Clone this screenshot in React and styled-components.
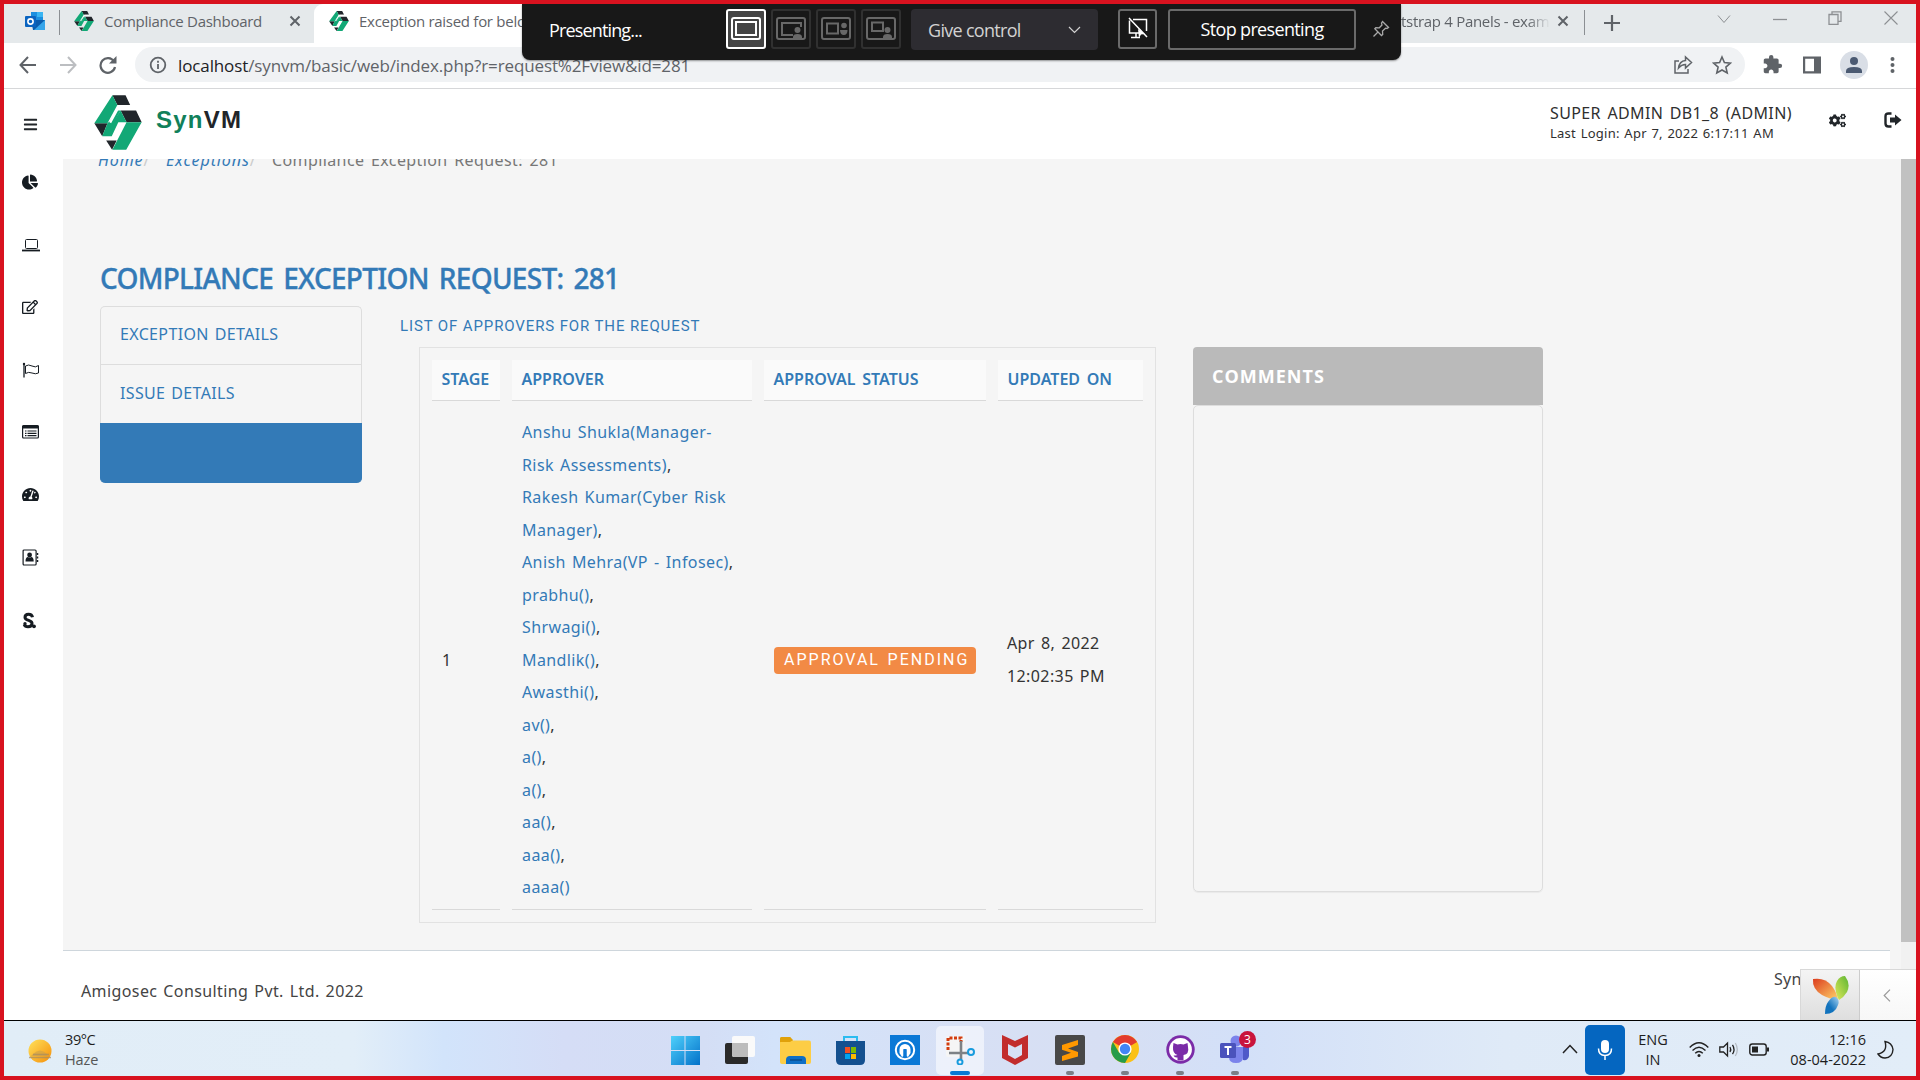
import React from "react";
import styled, { createGlobalStyle, css } from "styled-components";
import {
  FaBars,
  FaChartPie,
  FaRegEdit,
  FaTachometerAlt,
  FaCogs,
} from "react-icons/fa";
import { MdExtension } from "react-icons/md";

const GlobalStyle = createGlobalStyle`
  *, *::before, *::after { box-sizing: border-box; }
  body { margin: 0; background: #fff; overflow: hidden; }
  svg { display: block; flex: none; }
`;

const noto = `"Noto Sans", "Open Sans", sans-serif`;
const segoe = `"Open Sans", "Noto Sans", sans-serif`;
const roboto = `Roboto, "Noto Sans", sans-serif`;

const Screen = styled.div`
  position: relative;
  width: 1920px;
  height: 1080px;
  border: 4px solid #d8121f;
  display: flex;
  flex-direction: column;
  overflow: hidden;
  background: #fff;
  color: #333;
  font-family: ${noto};
  font-size: 16px;
`;

/* ---------- browser ---------- */

const TabStrip = styled.div`
  height: 39px;
  flex: none;
  display: flex;
  background: #e5e9eb;
  font-family: ${segoe};
  font-size: 15px;
  line-height: 34px;
  color: #5f6368;
`;

const PinnedTab = styled.div`
  width: 55px;
  padding: 7px 0 0 21px;
  flex: none;
`;

const TabDivider = styled.div`
  width: 1px;
  height: 25px;
  margin-top: 6px;
  background: #8b8f93;
  flex: none;
`;

const Tab = styled.div`
  width: ${(p) => p.$w}px;
  flex: none;
  display: flex;
  align-items: flex-start;
  padding-left: ${(p) => p.$pad || 0}px;
  overflow: hidden;
  ${(p) =>
    p.$active &&
    css`
      background: #fff;
      border-radius: 9px 0 0 0;
    `}
`;

const TabIcon = styled.div`
  padding-top: 7px;
  margin-right: 10px;
`;

const TabTitle = styled.span`
  white-space: nowrap;
  letter-spacing: ${(p) => p.$ls || "0"}px;
  width: ${(p) => p.$w}px;
  overflow: hidden;
  ${(p) =>
    p.$fade &&
    css`
      mask-image: linear-gradient(90deg, #000 85%, transparent);
    `}
`;

const CloseMark = styled.div`
  padding: 11px 0 0 ${(p) => p.$gap}px;
`;

const WindowControls = styled.div`
  margin-left: auto;
  width: 203px;
  padding: 7px 18px 0 4px;
  display: flex;
  justify-content: space-between;
`;

const AddressBar = styled.div`
  height: 46px;
  flex: none;
  display: flex;
  align-items: center;
  border-bottom: 1px solid #d6d7d9;
  padding: 0 21px 2px 14px;
`;

const NavButtons = styled.div`
  display: flex;
  gap: 20px;
  width: 117px;
`;

const UrlPill = styled.div`
  width: 1610px;
  height: 35px;
  border-radius: 18px;
  background: #f0f2f4;
  display: flex;
  align-items: center;
  padding: 1px 13px 0 14px;
  font-family: ${segoe};
  font-size: 17px;
  color: #5f6368;
  gap: 11px;
`;

const Url = styled.span`
  white-space: nowrap;
  letter-spacing: -0.12px;
  b {
    font-weight: 400;
    color: #202124;
  }
`;

const PillActions = styled.div`
  margin-left: auto;
  display: flex;
  gap: 19px;
`;

const ToolbarActions = styled.div`
  flex: 1;
  display: flex;
  align-items: center;
  justify-content: space-between;
  margin-left: 17px;
`;

const Avatar = styled.div`
  width: 28px;
  height: 28px;
  margin: 0 2px 0 -2px;
  border-radius: 50%;
  background: #d9dee6;
  display: flex;
  align-items: center;
  justify-content: center;
`;

/* ---------- presenting overlay ---------- */

const PresentBar = styled.div`
  position: absolute;
  left: 518px;
  top: 0;
  width: 879px;
  height: 56px;
  border-radius: 0 0 8px 8px;
  background: #181818;
  color: #fff;
  display: flex;
  align-items: flex-start;
  padding: 5px 0 0 27px;
  font-family: ${segoe};
  font-size: 18px;
  box-shadow: 0 1px 2px rgba(0, 0, 0, 0.4);
`;

const PresentLabel = styled.div`
  width: 177px;
  line-height: 42px;
  letter-spacing: -0.85px;
`;

const LayoutButton = styled.div`
  width: 40px;
  height: 40px;
  margin-right: 5px;
  border-radius: 3px;
  border: 2px solid ${(p) => (p.$on ? "#fff" : "#303030")};
  background: ${(p) => (p.$on ? "#444" : "transparent")};
  color: ${(p) => (p.$on ? "#fff" : "#686868")};
  display: flex;
  align-items: center;
  justify-content: center;
`;

const ControlSelect = styled.div`
  width: 187px;
  height: 41px;
  margin: 0 20px 0 5px;
  border-radius: 4px;
  background: #2d2c31;
  color: #d2d2d2;
  display: flex;
  align-items: center;
  justify-content: space-between;
  padding: 0 17px 0 17px;
  letter-spacing: -0.7px;
`;

const OutlineButton = styled.div`
  width: ${(p) => p.$w}px;
  height: ${(p) => p.$h || 41}px;
  margin-right: ${(p) => p.$mr || 0}px;
  border: 2px solid #6a6a6a;
  border-radius: 3px;
  padding-bottom: 2px;
  display: flex;
  align-items: center;
  justify-content: center;
  letter-spacing: -0.65px;
  white-space: nowrap;
`;

const PinHolder = styled.div`
  padding: 11px 0 0 16px;
`;

/* ---------- page ---------- */

const Header = styled.header`
  height: 70px;
  flex: none;
  display: flex;
  background: #fff;
`;

const MenuToggle = styled.div`
  width: 90px;
  padding: 28px 0 0 19px;
  color: #212529;
`;

const BrandMark = styled.div`
  padding-top: 6px;
`;

const BrandName = styled.div`
  font: 700 24px/28px "Liberation Sans", Arial, sans-serif;
  letter-spacing: 1.25px;
  color: #212529;
  padding: 17px 0 0 14px;
  span {
    color: #11805a;
  }
`;

const Account = styled.div`
  margin-left: auto;
  width: 279px;
  padding-top: 13px;
  color: #2f2f2f;
  white-space: nowrap;
`;

const AccountName = styled.div`
  font-size: 16px;
  line-height: 22px;
  letter-spacing: 0.37px;
  word-spacing: 2px;
`;

const LastLogin = styled.div`
  font-size: 13px;
  line-height: 18px;
  letter-spacing: 0.25px;
  word-spacing: 1px;
`;

const HeaderIcon = styled.div`
  width: ${(p) => p.$w}px;
  padding-top: 23px;
  color: #212529;
`;

const Body = styled.div`
  height: 861px;
  flex: none;
  display: flex;
`;

const Sidebar = styled.nav`
  width: 59px;
  padding: 15px 0 0 18px;
  display: flex;
  flex-direction: column;
  gap: 46.6px;
  color: #161c22;
`;

const SideIcon = styled.div`
  width: 17px;
  height: 16px;
  display: flex;
  align-items: center;
`;

const Main = styled.div`
  width: 1838px;
  height: 861px;
  overflow: hidden;
  background: #f5f5f5;
`;

const Breadcrumb = styled.div`
  height: 22px;
  margin: -10px 0 0 35px;
  display: flex;
  line-height: 22px;
  letter-spacing: 0.4px;
  word-spacing: 2px;
  color: #777;
  white-space: nowrap;
`;

const Crumb = styled.span`
  width: ${(p) => p.$w}px;
  color: #ccc;
  i {
    color: #337ab7;
    letter-spacing: 0.9px;
  }
`;

const Content = styled.div`
  height: 779px;
  padding: 88px 0 0 37px;
`;

const PageTitle = styled.h1`
  margin: 0 0 9px;
  font-size: 28px;
  line-height: 38px;
  font-weight: 500;
  letter-spacing: -0.72px;
  word-spacing: 3.6px;
  -webkit-text-stroke: 0.35px #337ab7;
  color: #337ab7;
`;

const Columns = styled.div`
  display: flex;
  align-items: flex-start;
`;

const ListGroup = styled.div`
  width: 262px;
  height: 177px;
  margin-right: 38px;
  display: flex;
  flex-direction: column;
`;

const ListItem = styled.div`
  height: 59px;
  border: 1px solid #ddd;
  border-bottom: 0;
  padding: 17px 19px;
  line-height: 22px;
  letter-spacing: 0.35px;
  word-spacing: 1.5px;
  color: #337ab7;
  white-space: nowrap;
  &:first-child {
    border-radius: 5px 5px 0 0;
    height: 58px;
    padding-top: 16px;
  }
  &:last-child {
    border-radius: 0 0 5px 5px;
    border-color: #337ab7;
    background: #337ab7;
    height: 60px;
  }
`;

const Approvers = styled.section`
  width: 793px;
  padding-top: 10px;
`;

const SectionLabel = styled.div`
  font-family: ${roboto};
  font-size: 15px;
  line-height: 20px;
  letter-spacing: 0.88px;
  color: #337ab7;
  margin-bottom: 11px;
  white-space: nowrap;
`;

const Table = styled.table`
  width: 737px;
  margin-left: 19px;
  table-layout: fixed;
  border: 1px solid #e2e2e2;
  border-collapse: separate;
  border-spacing: 12px;
  line-height: 32.5px;
  letter-spacing: 0.4px;
  word-spacing: 1.6px;
`;

const Th = styled.th`
  width: ${(p) => p.$w}px;
  height: 41px;
  padding: 8px 0 10px 9.5px;
  text-align: left;
  line-height: 22px;
  font-weight: 600;
  letter-spacing: 0;
  word-spacing: 2.5px;
  white-space: nowrap;
  color: #337ab7;
  background: #fafafa;
  border-bottom: 1px solid #d9d9d9;
`;

const Td = styled.td`
  height: 497px;
  padding: 3px 0 5px 10px;
  vertical-align: middle;
  border-bottom: 1px solid #d9d9d9;
`;

const Approver = styled.div`
  height: ${(p) => p.$lines * 32.5}px;
  white-space: pre-line;
  span {
    color: #337ab7;
  }
`;

const When = styled.div`
  margin: -1px 0 0 -1px;
`;

const Badge = styled.span`
  display: block;
  width: 202px;
  height: 27px;
  border-radius: 4px;
  background: #f28a45;
  color: #fff;
  font-family: ${roboto};
  font-weight: 400;
  font-size: 16px;
  line-height: 26px;
  letter-spacing: 2px;
  padding-left: 10px;
  white-space: nowrap;
`;

const Comments = styled.section`
  width: 350px;
  padding-top: 41px;
`;

const CommentsHead = styled.div`
  height: 58px;
  padding: 17px 19px;
  border-radius: 4px 4px 0 0;
  background: #bababa;
  color: #fff;
  font-family: ${segoe};
  font-weight: 700;
  font-size: 18px;
  line-height: 24px;
  letter-spacing: 1px;
`;

const CommentsBody = styled.div`
  height: 487px;
  border: 1px solid #ddd;
  border-radius: 5px;
  box-shadow: 0 1px 1px rgba(0, 0, 0, 0.05);
`;

const Footer = styled.footer`
  width: 1827px;
  height: 70px;
  border-top: 1px solid #ced6dc;
  background: #fff;
  display: flex;
  justify-content: space-between;
  padding: 29px 0 0 18px;
  line-height: 22px;
  letter-spacing: 0.4px;
  word-spacing: 1.4px;
  color: #444;
`;

const FooterProduct = styled.div`
  width: 116px;
  margin-top: -12px;
  letter-spacing: 0.3px;
`;

const ScrollTrack = styled.div`
  width: 15px;
  background: #f1f1f1;
`;

const ScrollThumb = styled.div`
  height: 783px;
  background: #c1c1c1;
`;

const DebugBar = styled.div`
  position: absolute;
  right: 0;
  bottom: 56px;
  width: 116px;
  height: 51px;
  display: flex;
  border: 1px solid #d8d8d8;
  border-width: 1px 0 0 1px;
  background: linear-gradient(#fff, #f7f7f7);
`;

const DebugLogo = styled.div`
  width: 59px;
  border-right: 1px solid #ccc;
  padding: 6px 0 0 11px;
  background: linear-gradient(#f4f4f4, #dedede);
`;

const DebugToggle = styled.div`
  padding: 19px 0 0 23px;
`;

/* ---------- taskbar ---------- */

const Taskbar = styled.div`
  height: 56px;
  flex: none;
  display: flex;
  border-top: 1px solid #000;
  background: linear-gradient(
    90deg,
    #e1edf7 0,
    #e2eef8 350px,
    #d2e4fb 440px,
    #d5ddf6 560px,
    #d4def5 700px,
    #d3e3fa 770px,
    #d7e0f5 950px,
    #d7dff3 1100px,
    #d3e0f8 1240px,
    #dfeaf7 1500px,
    #e2edf8 1912px
  );
  font-family: ${segoe};
  font-size: 14.5px;
  line-height: 20px;
  color: #1d1d1d;
`;

const Weather = styled.div`
  width: 657px;
  flex: none;
  display: flex;
  gap: 12px;
  padding: 9px 0 0 23px;
  letter-spacing: -0.4px;
  svg {
    margin-top: 9px;
  }
  span {
    color: #555;
    letter-spacing: -0.1px;
  }
`;

const Apps = styled.div`
  width: 607px;
  flex: none;
  display: flex;
`;

const AppTile = styled.div`
  width: 48px;
  height: 49px;
  flex: none;
  margin: 5px 7px 0 0;
  border-radius: 5px;
  display: flex;
  flex-direction: column;
  align-items: center;
  justify-content: space-between;
  padding-top: 9px;
  background: ${(p) => (p.$on ? "rgba(255,255,255,.55)" : "transparent")};
`;

const RunMark = styled.i`
  display: block;
  width: ${(p) => (p.$state === "on" ? 20 : 8)}px;
  height: 4px;
  border-radius: 2px;
  background: ${(p) =>
    p.$state === "on" ? "#0a78d4" : p.$state ? "#7b7f88" : "transparent"};
`;

const Tray = styled.div`
  flex: 1;
  margin-left: 294px;
  display: flex;
  align-items: flex-start;
`;

const Mic = styled.div`
  width: 40px;
  height: 50px;
  margin: 4px 0 0 7px;
  border-radius: 5px;
  background: #0566c0;
  display: flex;
  align-items: center;
  justify-content: center;
`;

const TrayText = styled.div`
  width: ${(p) => p.$w}px;
  padding-top: 9px;
  text-align: ${(p) => p.$align};
  white-space: nowrap;
`;

const TrayIcon = styled.div`
  padding-top: ${(p) => p.$top || 20}px;
  margin-left: ${(p) => p.$ml || 0}px;
`;

/* ---------- drawings ---------- */

const Stroke = ({ w, h, vb, c = "#5f6368", sw = 2, children, ...rest }) => (
  <svg
    width={w}
    height={h}
    viewBox={vb || `0 0 ${w} ${h}`}
    fill="none"
    stroke={c}
    strokeWidth={sw}
    {...rest}
  >
    {children}
  </svg>
);

const Logo = ({ w, h }) => (
  <svg width={w} height={h} viewBox="41 16 146 163" preserveAspectRatio="none">
    <path fill="#21262b" d="M97 17h40l14 29h-39zM42 100h40l-16 38zM122 62h47l17 35h-46zM78 151h32l-14 27z" />
    <path fill="#12a876" d="M97 17l15 29-30 54H42zM122 62l18 35h-25l-20 41H66l16-38h15zM140 97h46l-47 81H97z" />
    <path fill="#12a876" d="M122 62l-22 38-10 12-8-12 8-8 20-30z" />
    <path stroke="#fff" strokeWidth="7" fill="none" d="M153 50h-36L90 98" />
  </svg>
);

const OutlookIcon = () => (
  <svg width="21" height="20" viewBox="0 0 21 20">
    <path fill="#1a8fe0" d="M6 1h12v9H6z" />
    <path fill="#39b5f2" d="M12 1h6v5h-6z" />
    <path fill="#0a5cad" d="M6 9l14 0v10H8z" />
    <path fill="#35a5ea" d="M20 9v10H9z" />
    <rect y="5" width="11" height="11" rx="1" fill="#0a64c0" />
    <circle cx="5.5" cy="10.5" r="2.6" fill="none" stroke="#fff" strokeWidth="1.6" />
  </svg>
);

const Cross = ({ c = "#5f6368" }) => (
  <Stroke w={12} h={12} c={c} sw={2}>
    <path d="M1.5 1.5l9 9M10.5 1.5l-9 9" />
  </Stroke>
);

const Frame = ({ children }) => (
  <Stroke w={30} h={24} c="currentColor" sw={2}>
    <rect x="1" y="1" width="28" height="21" rx="2" />
    {children}
  </Stroke>
);

const SunIcon = () => (
  <svg width="26" height="26" viewBox="0 0 26 26">
    <defs>
      <linearGradient id="sun" x1="0" y1="0" x2="1" y2="1">
        <stop offset="0" stopColor="#ffe25c" />
        <stop offset="1" stopColor="#f58f0a" />
      </linearGradient>
    </defs>
    <circle cx="13" cy="12" r="11.5" fill="url(#sun)" />
    <path d="M6 15q7-7 14 0v2H4z" fill="#c9a04c" opacity=".6" />
    <path d="M2 18.500h22M6 15.500h16" stroke="#a58b61" strokeWidth="1.500" fill="none" opacity=".7" />
  </svg>
);

const StartIcon = () => (
  <svg width="30" height="30">
    <defs>
      <linearGradient id="st" x1="0" y1="0" x2="1" y2="1">
        <stop offset="0" stopColor="#4fd0fb" />
        <stop offset="1" stopColor="#0371c9" />
      </linearGradient>
    </defs>
    <path fill="url(#st)" d="M1 1h13.5v14H1zM15.500 1H30v14H15.500zM1 16h13.500v14H1zM15.500 16H30v14H15.500z" />
  </svg>
);

const TaskViewIcon = () => (
  <svg width="30" height="30">
    <rect x="0" y="8" width="23" height="21" rx="2" fill="#2a2a2a" />
    <rect x="7" y="1" width="23" height="21" rx="2" fill="#fafafa" />
    <path fill="#bcbcbc" d="M7 8h16v14H9q-2 0-2-2z" />
  </svg>
);

const FolderIcon = () => (
  <svg width="31" height="30">
    <path fill="#e0a10a" d="M0 4q0-2 2-2h8l3 4h16q1 0 1 2v5H0z" />
    <rect y="5.500" width="31" height="23.500" rx="2" fill="#fdcd45" />
    <path fill="#e0a10a" d="M0 4q0-2 2-2h8l3 3-3 2H0z" />
    <path fill="#0f6fc5" d="M6 29v-4q0-4 4-4h12q4 0 4 4v4z" />
    <path stroke="#0a4c8e" strokeWidth="1.500" d="M10 25h12" />
  </svg>
);

const StoreIcon = () => (
  <svg width="30" height="30">
    <path d="M9 7V2h13v5" fill="none" stroke="#2cbcf0" strokeWidth="2" />
    <path fill="#14508f" d="M1 6h29v19q0 5-5 5H6q-5 0-5-5z" />
    <path fill="#f25022" d="M10 12h5v6h-5z" />
    <path fill="#7fba00" d="M16 12h5v6h-5z" />
    <path fill="#00a4ef" d="M10 19h5v5h-5z" />
    <path fill="#ffb900" d="M16 19h5v5h-5z" />
  </svg>
);

const SupportIcon = () => (
  <svg width="30" height="30">
    <rect width="30" height="30" fill="#0a78d6" />
    <circle cx="15" cy="15" r="9.200" fill="none" stroke="#fff" strokeWidth="2" />
    <path d="M9.500 18v-3.500a5.500 5.500 0 0111 0V18l-2.500 4-1.500-1V14h-3v7l-1.500 1z" fill="#fff" />
    <path d="M15 14.500V23" stroke="#0a78d6" strokeWidth="3" />
  </svg>
);

const SnipIcon = () => (
  <svg width="30" height="30">
    <rect x="1" y="1" width="19" height="21" rx="2" fill="#f5f5f5" />
    <path d="M3 15V3h13v4" fill="none" stroke="#d23c10" strokeWidth="3" strokeDasharray="3 1.500" />
    <path d="M4 18h19M16 6v18" stroke="#7d8186" strokeWidth="2.600" />
    <circle cx="26" cy="17" r="3" fill="none" stroke="#189bdd" strokeWidth="2" />
    <circle cx="15" cy="27" r="2.500" fill="none" stroke="#189bdd" strokeWidth="2" />
  </svg>
);

const ShieldIcon = () => (
  <svg width="28" height="30">
    <path fill="#c22c2c" d="M1 0l13 6 13-6v23l-13 7-13-7zM7 9v11l7 4 7-4V9l-7 3.500z" fillRule="evenodd" />
  </svg>
);

const SublimeIcon = () => (
  <svg width="30" height="30">
    <rect width="30" height="30" rx="2" fill="#484848" />
    <path fill="#ff9800" d="M23 5v5l-10 3.500 10 3.500v4.500L7 26v-5l9-3.300-9-3V10z" />
  </svg>
);

const ChromeIcon = () => (
  <svg width="28" height="28" viewBox="-14 -14 28 28">
    <circle r="14" fill="#fbc116" />
    <path fill="#e33b2e" d="M0 0L-12.100-7A14 14 0 0112.100-7z" />
    <path fill="#269c4a" d="M-12.100-7A14 14 0 000 14L6 3.500-6 3.500z" />
    <circle r="6.600" fill="#fff" />
    <circle r="5.200" fill="#4285f4" />
  </svg>
);

const GithubIcon = () => (
  <svg width="29" height="29" viewBox="0 0 29 29">
    <circle cx="14.500" cy="14.500" r="14.200" fill="#7b2ba8" />
    <circle cx="14.500" cy="14.500" r="11.400" fill="#fff" />
    <path fill="#7b2ba8" d="M7.500 8l4 1.500q3-1 6 0l4-1.500.5 4q1.500 7-4.500 8v5.500h-6v-3q-3 .5-4-2 2 0 4-.5-5-1.500-4.500-8z" />
  </svg>
);

const TeamsWrap = styled.div`
  position: relative;
  height: 30px;
`;

const TeamsBadge = styled.span`
  position: absolute;
  left: 19px;
  top: -4px;
  width: 17px;
  height: 17px;
  border-radius: 50%;
  background: #c9143c;
  color: #fff;
  font-size: 12px;
  line-height: 17px;
  text-align: center;
`;

const TeamsIcon = () => (
  <TeamsWrap>
    <svg width="30" height="30">
      <circle cx="16" cy="6" r="5.500" fill="#7b83eb" />
      <path fill="#5059c9" d="M20 12h9v9q-1 5-6 4z" />
      <path fill="#7b83eb" d="M9 12h14v10q0 6-7 6t-7-6z" />
      <rect y="8" width="16" height="15" rx="1.500" fill="#4b53bc" />
      <path d="M4.500 12h7M8 12v8" stroke="#fff" strokeWidth="2" />
    </svg>
    <TeamsBadge>3</TeamsBadge>
  </TeamsWrap>
);

const LaptopIcon = () => (
  <Stroke w={18} h={14} c="currentColor" sw={1}>
    <rect x="3.500" y="1.500" width="12" height="9" rx="1" />
    <path d="M0 12.500h18" strokeWidth="1.800" />
  </Stroke>
);

const FlagIcon = () => (
  <Stroke w={18} h={16} c="currentColor" sw={1}>
    <path d="M2 1.500v14" strokeWidth="1.300" />
    <path d="M3.500 4q3-2 6.500 0t6.500-.5V11q-3 1.500-6.500 0t-6.500.5z" />
    <circle cx="2" cy="2" r="1.200" fill="currentColor" stroke="none" />
  </Stroke>
);

const ListIcon = () => (
  <Stroke w={17} h={14} c="currentColor" sw={1.2}>
    <rect x=".6" y=".6" width="15.800" height="12.400" rx="1" />
    <path d="M.6 2h15.800" strokeWidth="3" />
    <path d="M3 6h1.500M3 8.300h1.500M3 10.600h1.500M5.500 6h9M5.500 8.300h9M5.500 10.600h9" />
  </Stroke>
);

const ContactsIcon = () => (
  <Stroke w={17} h={17} c="currentColor" sw={1.2}>
    <rect x="1.100" y="1" width="13" height="15" rx="1" />
    <path d="M15.500 4v2M15.500 7.500v2M15.500 11v2" strokeWidth="1.500" />
    <circle cx="7.600" cy="6" r="2.400" fill="currentColor" stroke="none" />
    <path d="M3.500 12.500q0-4.500 2.500-4.500 1.600 1 3.200 0 2.500 0 2.500 4.500z" fill="currentColor" stroke="none" />
  </Stroke>
);

const ScribdIcon = () => (
  <Stroke w={15} h={17} c="currentColor" sw={3}>
    <path d="M10.500 5.200Q10 2.200 6.500 2.200T3 5.200q0 2 3.700 3.200T10 12q-.3 2.700-4 2.700-3 0-3.800-2.200" />
    <circle cx="3" cy="11.800" r="1.700" fill="currentColor" stroke="none" />
    <circle cx="12" cy="14.300" r="1.900" fill="currentColor" stroke="none" />
  </Stroke>
);

const SignOutIcon = () => (
  <svg width="18" height="16" viewBox="0 0 18 16">
    <path d="M7.500 1.500H4.500Q1.500 1.500 1.500 4.500v7q0 3 3 3h3" fill="none" stroke="currentColor" strokeWidth="2.400" />
    <path fill="currentColor" d="M6 5.500h5V2.500L17.500 8 11 13.500v-3H6z" />
  </svg>
);

const YiiIcon = () => (
  <svg width="38" height="40" viewBox="0 0 38 40">
    <defs>
      <linearGradient id="yo" x1="0" y1="0" x2="1" y2="1">
        <stop offset="0" stopColor="#dc3c1e" />
        <stop offset="1" stopColor="#ffd469" />
      </linearGradient>
      <linearGradient id="yg" x1="1" y1="0" x2="0" y2="1">
        <stop offset="0" stopColor="#5cb531" />
        <stop offset="1" stopColor="#e0e95a" />
      </linearGradient>
      <linearGradient id="yb" x1="1" y1="0" x2="0" y2="1">
        <stop offset="0" stopColor="#a6d3f2" />
        <stop offset=".6" stopColor="#1273bd" />
      </linearGradient>
    </defs>
    <path fill="url(#yo)" d="M1 3q12-2 19 7 5 7 6 14-9-1-16-5Q0 13 1 3z" />
    <path fill="url(#yg)" d="M27 24q-6-12-2-19 3-5 8-5 6 8 2 16-3 5-8 8z" />
    <path fill="url(#yb)" d="M13 38q0-8 3-12 4-6 8-5 4 3 2 8-3 9-13 9z" />
  </svg>
);

/* ---------- data ---------- */

const approvers = [
  ["Anshu Shukla(Manager-\nRisk Assessments)", 2],
  ["Rakesh Kumar(Cyber Risk\nManager)", 2],
  ["Anish Mehra(VP - Infosec)", 1],
  ["prabhu()", 1],
  ["Shrwagi()", 1],
  ["Mandlik()", 1],
  ["Awasthi()", 1],
  ["av()", 1],
  ["a()", 1],
  ["a()", 1],
  ["aa()", 1],
  ["aaa()", 1],
  ["aaaa()", 1],
];

const apps = [
  [StartIcon],
  [TaskViewIcon],
  [FolderIcon],
  [StoreIcon],
  [SupportIcon],
  [SnipIcon, "on"],
  [ShieldIcon],
  [SublimeIcon, "run"],
  [ChromeIcon, "run"],
  [GithubIcon, "run"],
  [TeamsIcon, "run"],
];

const sideIcons = [
  <FaChartPie size={16} />,
  <LaptopIcon />,
  <FaRegEdit size={16} />,
  <FlagIcon />,
  <ListIcon />,
  <FaTachometerAlt size={17} />,
  <ContactsIcon />,
  <ScribdIcon />,
];

export default function App() {
  return (
    <>
      <GlobalStyle />
      <Screen>
        <TabStrip>
          <PinnedTab>
            <OutlookIcon />
          </PinnedTab>
          <TabDivider />
          <Tab $w={254} $pad={14}>
            <TabIcon>
              <Logo w={20} h={20} />
            </TabIcon>
            <TabTitle $w={160} $ls="-0.28">
              Compliance Dashboard
            </TabTitle>
            <CloseMark $gap={25}>
              <Cross />
            </CloseMark>
          </Tab>
          <Tab $w={1087} $pad={15} $active>
            <TabIcon>
              <Logo w={20} h={20} />
            </TabIcon>
            <TabTitle $w={200} $ls="-0.28">
              Exception raised for below
            </TabTitle>
          </Tab>
          <Tab $w={183}>
            <TabTitle $w={149} $ls="-0.3" $fade>
              tstrap 4 Panels - examp
            </TabTitle>
            <CloseMark $gap={7}>
              <Cross />
            </CloseMark>
          </Tab>
          <TabDivider />
          <CloseMark $gap={19}>
            <Stroke w={16} h={16} sw={2.2} viewBox="0 1 16 16">
              <path d="M8 1v16M0 9h16" />
            </Stroke>
          </CloseMark>
          <WindowControls>
            <Stroke w={14} h={14} c="#8d9093" sw={1}>
              <path d="M1 4.500l6 7 6-7" />
            </Stroke>
            <Stroke w={14} h={14} c="#8d9093" sw={1.300}>
              <path d="M0 8.500h14" />
            </Stroke>
            <Stroke w={14} h={14} c="#8d9093" sw={1.300}>
              <path d="M1 3.500h9v10H1zM4 3V.8h9v9.500h-2.500" />
            </Stroke>
            <Stroke w={14} h={14} c="#8d9093" sw={1.100}>
              <path d="M.5.5l13 13M13.500.5l-13 13" />
            </Stroke>
          </WindowControls>
        </TabStrip>

        <AddressBar>
          <NavButtons>
            <Stroke w={20} h={18}>
              <path d="M18 9H3M10 1L2.500 9 10 17" />
            </Stroke>
            <Stroke w={20} h={18} c="#bcbec1">
              <path d="M2 9h15M10 1l7.500 8L10 17" />
            </Stroke>
            <Stroke w={20} h={18} sw={2.200}>
              <path d="M16 5.500A7.300 7.300 0 1017 11" />
              <path d="M18.500 0v7.500H11z" fill="#5f6368" stroke="none" />
            </Stroke>
          </NavButtons>
          <UrlPill>
            <Stroke w={18} h={18} sw={1.800}>
              <circle cx="9" cy="9" r="7.300" />
              <path d="M9 8v5M9 4.800v2" />
            </Stroke>
            <Url>
              <b>localhost</b>/synvm/basic/web/index.php?r=request%2Fview&id=281
            </Url>
            <PillActions>
              <Stroke w={20} h={20} sw={1.500}>
                <path d="M6 6H2v12h13v-4M5.500 13q1-7 7-7.500V2l6 5.500-6 5.500V9.500q-4 0-7 3.500z" />
              </Stroke>
              <Stroke w={20} h={20} sw={1.600}>
                <path d="M10 2l2.400 5.500 6 .6-4.500 4 1.300 5.900L10 15l-5.200 3 1.300-5.900-4.500-4 6-.6z" />
              </Stroke>
            </PillActions>
          </UrlPill>
          <ToolbarActions>
            <MdExtension size={21} color="#5f6368" />
            <Stroke w={18} h={18} sw={2.200}>
              <path d="M1.100 1.600h15.800v14.800H1.100z" />
              <path d="M11 1h6v16h-6z" fill="#5f6368" stroke="none" />
            </Stroke>
            <Avatar>
              <svg width="16" height="16" fill="#4b5a72">
                <circle cx="8" cy="4" r="4" />
                <path d="M0 16v-2q0-4 8-4t8 4v2z" />
              </svg>
            </Avatar>
            <svg width="5" height="18" fill="#5f6368">
              <circle cx="2.500" cy="3" r="2" />
              <circle cx="2.500" cy="9" r="2" />
              <circle cx="2.500" cy="15" r="2" />
            </svg>
          </ToolbarActions>
        </AddressBar>

        <Header>
          <MenuToggle>
            <FaBars size={15} />
          </MenuToggle>
          <BrandMark>
            <Logo w={48} h={55} />
          </BrandMark>
          <BrandName>
            <span>Syn</span>VM
          </BrandName>
          <Account>
            <AccountName>SUPER ADMIN DB1_8 (ADMIN)</AccountName>
            <LastLogin>Last Login: Apr 7, 2022 6:17:11 AM</LastLogin>
          </Account>
          <HeaderIcon $w={55}>
            <FaCogs size={17} />
          </HeaderIcon>
          <HeaderIcon $w={32}>
            <SignOutIcon />
          </HeaderIcon>
        </Header>

        <Body>
          <Sidebar>
            {sideIcons.map((icon, i) => (
              <SideIcon key={i}>{icon}</SideIcon>
            ))}
          </Sidebar>
          <Main>
            <Breadcrumb>
              <Crumb $w={68}>
                <i>Home</i>/
              </Crumb>
              <Crumb $w={106}>
                <i>Exceptions</i>/
              </Crumb>
              Compliance Exception Request: 281
            </Breadcrumb>
            <Content>
              <PageTitle>COMPLIANCE EXCEPTION REQUEST: 281</PageTitle>
              <Columns>
                <ListGroup>
                  <ListItem>EXCEPTION DETAILS</ListItem>
                  <ListItem>ISSUE DETAILS</ListItem>
                  <ListItem />
                </ListGroup>
                <Approvers>
                  <SectionLabel>LIST OF APPROVERS FOR THE REQUEST</SectionLabel>
                  <Table>
                    <thead>
                      <tr>
                        <Th $w={68}>STAGE</Th>
                        <Th $w={240}>APPROVER</Th>
                        <Th $w={222}>APPROVAL STATUS</Th>
                        <Th $w={145}>UPDATED ON</Th>
                      </tr>
                    </thead>
                    <tbody>
                      <tr>
                        <Td>1</Td>
                        <Td>
                          {approvers.map(([name, lines], i) => (
                            <Approver key={i} $lines={lines}>
                              <span>{name}</span>
                              {i < approvers.length - 1 && ","}
                            </Approver>
                          ))}
                        </Td>
                        <Td>
                          <Badge>APPROVAL PENDING</Badge>
                        </Td>
                        <Td>
                          <When>
                            Apr 8, 2022
                            <br />
                            12:02:35 PM
                          </When>
                        </Td>
                      </tr>
                    </tbody>
                  </Table>
                </Approvers>
                <Comments>
                  <CommentsHead>COMMENTS</CommentsHead>
                  <CommentsBody />
                </Comments>
              </Columns>
            </Content>
            <Footer>
              <div>Amigosec Consulting Pvt. Ltd. 2022</div>
              <FooterProduct>Syn</FooterProduct>
            </Footer>
          </Main>
          <ScrollTrack>
            <ScrollThumb />
          </ScrollTrack>
        </Body>

        <Taskbar>
          <Weather>
            <SunIcon />
            <div>
              39°C
              <br />
              <span>Haze</span>
            </div>
          </Weather>
          <Apps>
            {apps.map(([Icon, state], i) => (
              <AppTile key={i} $on={state === "on"}>
                <Icon />
                <RunMark $state={state} />
              </AppTile>
            ))}
          </Apps>
          <Tray>
            <TrayIcon $top={23}>
              <Stroke w={16} h={10} c="#222" sw={1.500}>
                <path d="M1 9l7-7.500L15 9" />
              </Stroke>
            </TrayIcon>
            <Mic>
              <svg width="16" height="20">
                <rect x="4" y="0" width="8" height="13" rx="4" fill="#fff" />
                <path d="M1.500 8.500q0 7 6.500 7t6.500-7M8 15v5" fill="none" stroke="#fff" strokeWidth="1.500" />
              </svg>
            </Mic>
            <TrayText $w={56} $align="center">
              ENG
              <br />
              IN
            </TrayText>
            <TrayIcon $ml={8}>
              <Stroke w={20} h={17} c="#222" sw={1.400}>
                <path d="M.7 6.500q9.300-9.500 18.600 0M3.500 9.500q6.500-6.500 13 0M6.200 12.300q3.800-3.600 7.600 0" />
                <circle cx="10" cy="14.500" r="1.500" fill="#222" stroke="none" />
              </Stroke>
            </TrayIcon>
            <TrayIcon $ml={10}>
              <Stroke w={20} h={17} c="#222" sw={1.300}>
                <path d="M.8 6h3.700L8.500 2v13l-4-4H.8zM11 6q1.500 2.500 0 5M13.500 3.800q3 4.700 0 9.400" />
                <path d="M16.300 2q4 6.500 0 13" stroke="#b5bcc4" />
              </Stroke>
            </TrayIcon>
            <TrayIcon $ml={10}>
              <Stroke w={20} h={17} c="#222" sw={1.400}>
                <rect x=".8" y="3" width="16.400" height="11" rx="2.500" />
                <path d="M3 5.500h6v6H3zM18 6.500h2v4h-2z" fill="#222" stroke="none" />
              </Stroke>
            </TrayIcon>
            <TrayText $w={97} $align="right">
              12:16
              <br />
              08-04-2022
            </TrayText>
            <TrayIcon $ml={11} $top={19}>
              <Stroke w={18} h={20} c="#222" sw={1.400}>
                <path d="M8 1.500q7 1 8 8-.5 8-8 8.500-4.500-.2-7-4 10-2 7-12.500z" />
              </Stroke>
            </TrayIcon>
          </Tray>
        </Taskbar>

        <DebugBar>
          <DebugLogo>
            <YiiIcon />
          </DebugLogo>
          <DebugToggle>
            <Stroke w={8} h={13} c="#999" sw={1.200}>
              <path d="M7 .7L1.200 6.500 7 12.300" />
            </Stroke>
          </DebugToggle>
        </DebugBar>

        <PresentBar>
          <PresentLabel>Presenting...</PresentLabel>
          <LayoutButton $on>
            <Frame>
              <rect x="5" y="5" width="20" height="13" />
            </Frame>
          </LayoutButton>
          <LayoutButton>
            <Frame>
              <path d="M17 18H6V6h19v4" />
              <circle cx="21.500" cy="13" r="3" fill="currentColor" stroke="none" />
              <path d="M17 23v-3q0-3 4.500-3t4.500 3v3z" fill="currentColor" stroke="none" />
            </Frame>
          </LayoutButton>
          <LayoutButton>
            <Frame>
              <rect x="6" y="6.500" width="11" height="10" />
              <circle cx="23" cy="8.500" r="2.800" fill="currentColor" stroke="none" />
              <path d="M19 13h7.500q0 5-3.700 5T19 13z" fill="currentColor" stroke="none" />
            </Frame>
          </LayoutButton>
          <LayoutButton>
            <Frame>
              <rect x="6" y="5.500" width="11" height="8.500" />
              <circle cx="21.500" cy="13" r="3" fill="currentColor" stroke="none" />
              <path d="M17 23v-3q0-3 4.500-3t4.500 3v3z" fill="currentColor" stroke="none" />
            </Frame>
          </LayoutButton>
          <ControlSelect>
            Give control
            <Stroke w={13} h={8} c="#d2d2d2" sw={1.200}>
              <path d="M1 1l5.500 5.500L12 1" />
            </Stroke>
          </ControlSelect>
          <OutlineButton $w={39} $h={40} $mr={11}>
            <Stroke w={22} h={22} c="#fff" sw={1.500}>
              <path d="M12 16H2.500V3.500M6 2.500h13.500V14M2 1l18 19M4 20.500h9M9 16v4" />
              <path d="M11 12l7 5-4 .5-2 3.500z" fill="#fff" stroke="none" />
            </Stroke>
          </OutlineButton>
          <OutlineButton $w={188}>Stop presenting</OutlineButton>
          <PinHolder>
            <Stroke w={18} h={18} c="#a8a8a8" sw={1.300}>
              <path d="M10.500 1.500l6 6-1.500 1-1.500-.3L10.500 11l.2 3.500-1.200 1L2.800 8.800l1-1.200 3.500.2L10 5l-.5-2zM6 12l-4.500 4.500" />
            </Stroke>
          </PinHolder>
        </PresentBar>
      </Screen>
    </>
  );
}
